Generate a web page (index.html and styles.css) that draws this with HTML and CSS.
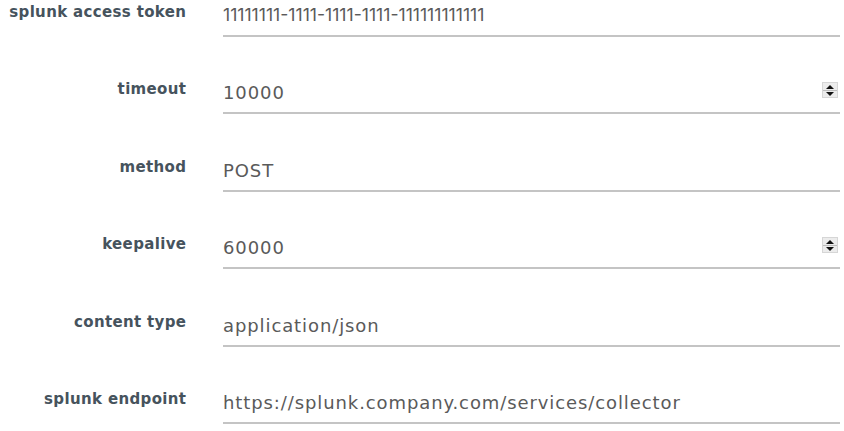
FILE: index.html
```html
<!DOCTYPE html>
<html>
<head>
<meta charset="utf-8">
<link rel="stylesheet" href="styles.css">
</head>
<body>
<form class="form">
  <div class="row">
    <label class="label">splunk access token</label>
    <div class="field"><input class="input token" type="text" value="11111111-1111-1111-1111-111111111111"></div>
  </div>
  <div class="row">
    <label class="label">timeout</label>
    <div class="field"><input class="input" type="text" value="10000"><span class="spin"><span class="up"></span><span class="down"></span></span></div>
  </div>
  <div class="row">
    <label class="label">method</label>
    <div class="field"><input class="input" type="text" value="POST"></div>
  </div>
  <div class="row">
    <label class="label">keepalive</label>
    <div class="field"><input class="input" type="text" value="60000"><span class="spin"><span class="up"></span><span class="down"></span></span></div>
  </div>
  <div class="row">
    <label class="label">content type</label>
    <div class="field"><input class="input" type="text" value="application/json"></div>
  </div>
  <div class="row">
    <label class="label">splunk endpoint</label>
    <div class="field"><input class="input" type="text" value="https://splunk.company.com/services/collector"></div>
  </div>
</form>
</body>
</html>
```
FILE: styles.css
```css
html, body {
  margin: 0;
  padding: 0;
  background: #fff;
}
.form {
  display: flex;
  flex-direction: column;
  gap: 40.4px;
  width: 840px;
}
.row {
  display: grid;
  grid-template-columns: 186px 617px;
  column-gap: 37px;
  align-items: start;
}
.label {
  font-family: "DejaVu Sans", sans-serif;
  font-weight: bold;
  font-size: 15px;
  letter-spacing: 0.35px;
  color: #46535d;
  text-align: right;
  line-height: 20px;
  padding-top: 2px;
  margin-right: -0.35px;
  white-space: nowrap;
}
.field {
  position: relative;
}
.input {
  display: block;
  box-sizing: border-box;
  width: 100%;
  height: 37px;
  margin: 0;
  padding: 0 0 4px 0;
  border: 0;
  border-bottom: 2px solid #c4c4c4;
  outline: none;
  background: transparent;
  font-family: "DejaVu Sans", sans-serif;
  font-size: 18px;
  letter-spacing: 0.9px;
  color: #5a5a5a;
}
.token {
  font-family: Inter, sans-serif;
  font-size: 17.6px;
  letter-spacing: 0;
  padding-bottom: 6px;
}
.spin {
  position: absolute;
  right: 2px;
  top: 5px;
  width: 16px;
  height: 16px;
  box-sizing: border-box;
  border: 1px solid #d6d6d6;
  background: #ececec;
  display: flex;
  flex-direction: column;
}
.spin .up, .spin .down {
  flex: 1;
  position: relative;
}
.spin .down {
  border-top: 1px solid #bdbdbd;
}
.spin .up::after, .spin .down::after {
  content: "";
  position: absolute;
  left: 3px;
  width: 0;
  height: 0;
  border-left: 4px solid transparent;
  border-right: 4px solid transparent;
}
.spin .up::after {
  top: 2px;
  border-bottom: 4px solid #111;
}
.spin .down::after {
  top: 1px;
  border-top: 4px solid #111;
}
```
